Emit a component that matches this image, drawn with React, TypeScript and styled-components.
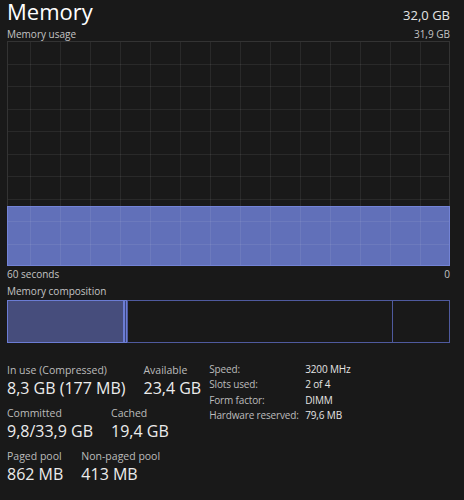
import styled, { createGlobalStyle } from "styled-components";

const GlobalStyle = createGlobalStyle`
  html, body {
    margin: 0;
    padding: 0;
    background: #191919;
  }
  body {
    font-family: "Open Sans", "Noto Sans", sans-serif;
    color: #e8e8e8;
  }
`;

const TOTAL = 32.0;
const BAR_WIDTH = 443;

const composition = [
  { name: "In use", gb: 8.45, kind: "used" },
  { name: "Modified", gb: 0.2, kind: "modified" },
  { name: "Standby", gb: 19.15, kind: "standby" },
  { name: "Free", gb: 4.2, kind: "free" },
] as const;

const stats = [
  [
    { label: "In use (Compressed)", value: "8,3 GB (177 MB)" },
    { label: "Available", value: "23,4 GB" },
  ],
  [
    { label: "Committed", value: "9,8/33,9 GB" },
    { label: "Cached", value: "19,4 GB" },
  ],
  [
    { label: "Paged pool", value: "862 MB" },
    { label: "Non-paged pool", value: "413 MB" },
  ],
];

const hardware = [
  { label: "Speed:", value: "3200 MHz" },
  { label: "Slots used:", value: "2 of 4" },
  { label: "Form factor:", value: "DIMM" },
  { label: "Hardware reserved:", value: "79,6 MB" },
];

const Page = styled.div`
  width: 464px;
  height: 500px;
  box-sizing: border-box;
  padding: 0 14px 0 7px;
  display: flex;
  flex-direction: column;
  overflow: hidden;
`;

const Header = styled.div`
  display: flex;
  justify-content: space-between;
  align-items: baseline;
`;

const Title = styled.h1`
  margin: 0;
  font-size: 22px;
  font-weight: 400;
  line-height: 22px;
  color: #ffffff;
`;

const Total = styled.span`
  font-size: 13px;
  line-height: 18px;
  color: #e4e4e4;
`;

const CaptionRow = styled.div<{ $gap: number }>`
  display: flex;
  justify-content: space-between;
  margin-top: ${(p) => p.$gap}px;
  font-size: 10px;
  line-height: 12px;
  color: #c4c4c4;
`;

const Graph = styled.svg`
  display: block;
  margin-top: 1px;
  width: 443px;
  height: 225px;
`;

const Composition = styled.div`
  display: flex;
  margin-top: 3px;
  height: 43px;
  width: ${BAR_WIDTH}px;
`;

const Segment = styled.div<{ $kind: string; $last: boolean }>`
  box-sizing: border-box;
  height: 100%;
  border: 1px solid ${(p) => (p.$kind === "used" || p.$kind === "modified" ? "#6b7cd4" : "#4f5a9e")};
  border-right-width: ${(p) => (p.$last || p.$kind === "used" || p.$kind === "modified" ? 1 : 0)}px;
  background: ${(p) => (p.$kind === "used" ? "#464d7c" : p.$kind === "modified" ? "#3b4377" : "transparent")};
`;

const Details = styled.div`
  display: flex;
  margin-top: 21px;
  align-items: flex-start;
`;

const StatRows = styled.div`
  display: flex;
  flex-direction: column;
  gap: 8px;
`;

const StatRow = styled.div`
  display: flex;
  gap: 18px;
`;

const Stat = styled.div`
  display: flex;
  flex-direction: column;
`;

const StatLabel = styled.span`
  font-size: 10.5px;
  line-height: 13px;
  color: #bcbcbc;
  white-space: nowrap;
`;

const StatValue = styled.span`
  font-size: 16px;
  line-height: 22px;
  color: #ececec;
  white-space: nowrap;
`;

const HardwareTable = styled.div`
  display: grid;
  grid-template-columns: 96px auto;
  margin-left: 8px;
  margin-top: -2px;
  font-size: 10px;
  letter-spacing: -0.15px;
  line-height: 15.3px;
`;

const HwLabel = styled.span`
  color: #bcbcbc;
  white-space: nowrap;
`;

const HwValue = styled.span`
  color: #e4e4e4;
  white-space: nowrap;
`;

function UsageGraph() {
  const w = 443;
  const h = 225;
  const fillTop = 165;
  const vLines = Array.from({ length: 14 }, (_, i) => w - 30 * (i + 1));
  const hLines = Array.from({ length: 9 }, (_, i) => 22.5 * (i + 1));
  return (
    <Graph viewBox={`0 0 ${w} ${h}`}>
      <rect x={0} y={fillTop} width={w} height={h - fillTop} fill="#6170b9" />
      {vLines.map((x) => (
        <line key={`v${x}`} x1={x + 0.5} y1={0} x2={x + 0.5} y2={h} stroke="#ffffff" strokeOpacity={0.07} />
      ))}
      {hLines.map((y) => (
        <line key={`h${y}`} x1={0} y1={Math.round(y) + 0.5} x2={w} y2={Math.round(y) + 0.5} stroke="#ffffff" strokeOpacity={0.07} />
      ))}
      <rect x={0.5} y={0.5} width={w - 1} height={h - 1} fill="none" stroke="#333333" />
      <rect x={0.5} y={fillTop + 0.5} width={w - 1} height={h - fillTop - 1} fill="none" stroke="#7383d6" />
    </Graph>
  );
}

export default function App() {
  return (
    <>
      <GlobalStyle />
      <Page>
        <Header>
          <Title>Memory</Title>
          <Total>32,0 GB</Total>
        </Header>
        <CaptionRow $gap={4}>
          <span>Memory usage</span>
          <span>31,9 GB</span>
        </CaptionRow>
        <UsageGraph />
        <CaptionRow $gap={2}>
          <span>60 seconds</span>
          <span>0</span>
        </CaptionRow>
        <CaptionRow $gap={5}>
          <span>Memory composition</span>
        </CaptionRow>
        <Composition>
          {composition.map((c, i) => (
            <Segment
              key={c.name}
              $kind={c.kind}
              $last={i === composition.length - 1}
              style={{ width: Math.max(3, Math.round((c.gb / TOTAL) * BAR_WIDTH)) }}
            />
          ))}
        </Composition>
        <Details>
          <StatRows>
            {stats.map((row, r) => (
              <StatRow key={r}>
                {row.map((s) => (
                  <Stat key={s.label}>
                    <StatLabel>{s.label}</StatLabel>
                    <StatValue>{s.value}</StatValue>
                  </Stat>
                ))}
              </StatRow>
            ))}
          </StatRows>
          <HardwareTable>
            {hardware.map((h) => (
              <>
                <HwLabel key={h.label}>{h.label}</HwLabel>
                <HwValue key={h.value}>{h.value}</HwValue>
              </>
            ))}
          </HardwareTable>
        </Details>
      </Page>
    </>
  );
}
